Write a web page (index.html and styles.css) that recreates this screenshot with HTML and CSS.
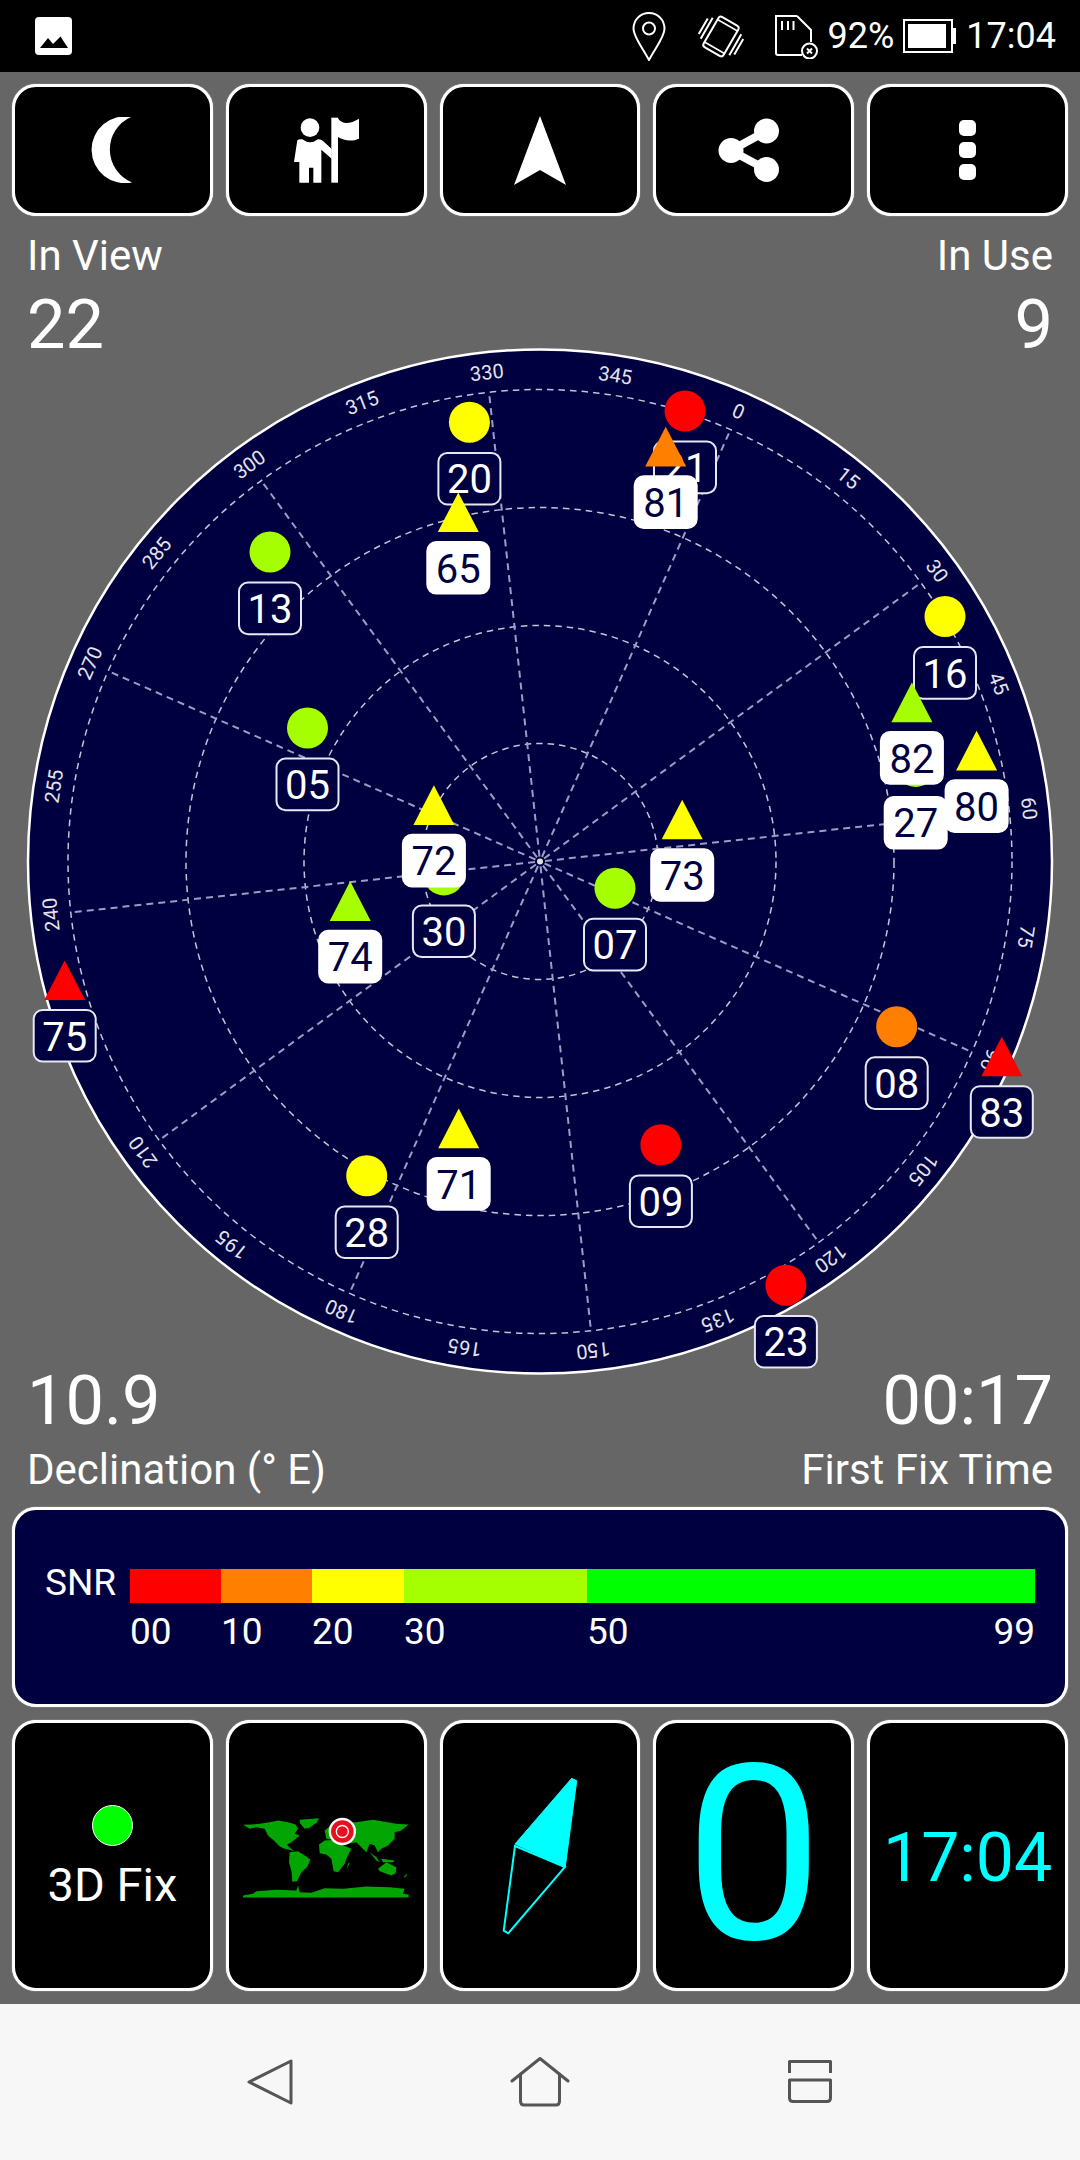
FILE: index.html
```html
<!DOCTYPE html>
<html lang="en">
<head>
    <meta charset="UTF-8">
    <meta name="viewport" content="width=device-width, initial-scale=1.0">
    <title>GPS Status</title>
    <link rel="stylesheet" href="styles.css">
</head>
<body>
    <header class="status-bar">
        <svg class="ic-image" width="37" height="38" viewBox="0 0 37 38">
            <rect width="37" height="38" rx="4" fill="#fff"/>
            <polygon points="5,31 13,21 18,27 25.5,19.5 33,31" fill="#000"/>
        </svg>
        <div class="status-right">
            <svg class="ic-pin" width="35" height="49" viewBox="0 0 35 49" fill="none" stroke="#fff" stroke-width="2">
                <path d="M17 1C8 1 1.5 8 1.5 17C1.5 25 12 38 17 48C22 38 32.5 25 32.5 17C32.5 8 26 1 17 1Z"/>
                <circle cx="17" cy="16.5" r="6"/>
            </svg>
            <svg class="ic-vibrate" width="48" height="43" viewBox="0 0 48 43" fill="none" stroke="#fff" stroke-width="2">
                <g transform="translate(24 21.5) rotate(30)">
                    <rect x="-11.5" y="-17.5" width="23" height="35" rx="3"/>
                    <path d="M-11 -13H11M-11 13H11" stroke-width="1.5"/>
                    <path d="M-16.5 -12V12M-20.5 -9V9M16.5 -12V12M20.5 -9V9"/>
                </g>
            </svg>
            <svg class="ic-sd" width="43" height="44" viewBox="0 0 43 44" fill="none" stroke="#fff" stroke-width="2">
                <path d="M22 1L36 15V27M27 40H3Q1 40 1 38V1H22"/>
                <path d="M7 6V15M13 6V15M18.5 6V15"/>
                <circle cx="34.5" cy="36" r="7.5"/>
                <path d="M32 33.5L37 38.5M37 33.5L32 38.5"/>
            </svg>
            <span class="status-text status-pct">92%</span>
            <svg class="ic-battery" width="54" height="34" viewBox="0 0 54 34">
                <rect x="1" y="1" width="48" height="32" fill="none" stroke="#fff" stroke-width="2"/>
                <rect x="5" y="5" width="38" height="24" fill="#fff"/>
                <rect x="50" y="9" width="3" height="16" fill="#fff"/>
            </svg>
            <span class="status-text status-time">17:04</span>
        </div>
    </header>

    <nav class="tile-row top-row">
        <div class="tile">
            <svg width="42" height="66" viewBox="0 0 42 66"><path d="M40 0A33.4 33.4 0 1 0 41 65.5A35.6 35.6 0 0 1 40 0Z" fill="#fff"/></svg>
        </div>
        <div class="tile">
            <svg width="65" height="66" viewBox="190 80 195 198" fill="#fff">
                <circle cx="238" cy="112" r="28"/>
                <path d="M200 150Q205 145 215 147Q238 165 262 147Q270 146 278 153L303 176V205L272 178V277H248V232H235V277H206V215H190Z"/>
                <rect x="302" y="82" width="20" height="195"/>
                <path d="M322 84C335 105 360 100 385 85V145C360 155 340 150 322 140Z"/>
            </svg>
        </div>
        <div class="tile">
            <svg width="52" height="69" viewBox="0 0 52 69"><polygon points="26,0 52,69 26,54 0,69" fill="#fff"/></svg>
        </div>
        <div class="tile">
            <svg class="ic-share" width="63" height="65" viewBox="0 0 63 65" fill="#fff" stroke="#fff">
                <path d="M49.5 13L14 32.5L49.5 51.5" fill="none" stroke-width="8"/>
                <circle cx="14" cy="32.5" r="12.5" stroke="none"/>
                <circle cx="49.5" cy="13" r="12.5" stroke="none"/>
                <circle cx="49.5" cy="51.5" r="12.5" stroke="none"/>
            </svg>
        </div>
        <div class="tile">
            <svg width="17" height="60" viewBox="0 0 17 60" fill="#fff">
                <rect width="17" height="16" rx="5"/>
                <rect y="22" width="17" height="16" rx="5"/>
                <rect y="44" width="17" height="16" rx="5"/>
            </svg>
        </div>
    </nav>

    <section class="stats stats-top">
        <div>
            <div class="stat-label">In View</div>
            <div class="stat-value">22</div>
        </div>
        <div class="stat-right">
            <div class="stat-label">In Use</div>
            <div class="stat-value">9</div>
        </div>
    </section>

    <svg class="radar" width="1080" height="1026" viewBox="0 349 1080 1026">
        <circle cx="540" cy="861.5" r="512" class="radar-disc"/>
        <g transform="translate(540 861.5)">
            <circle r="118" class="ring"/>
            <circle r="236" class="ring"/>
            <circle r="354" class="ring"/>
            <circle r="472" class="ring"/>
            <circle r="3" class="hub"/>
            <g transform="rotate(23.8)">
                <line y1="-5" y2="-472" class="spoke"/>
                <line y1="-5" y2="-472" class="spoke" transform="rotate(30)"/>
                <line y1="-5" y2="-472" class="spoke" transform="rotate(60)"/>
                <line y1="-5" y2="-472" class="spoke" transform="rotate(90)"/>
                <line y1="-5" y2="-472" class="spoke" transform="rotate(120)"/>
                <line y1="-5" y2="-472" class="spoke" transform="rotate(150)"/>
                <line y1="-5" y2="-472" class="spoke" transform="rotate(180)"/>
                <line y1="-5" y2="-472" class="spoke" transform="rotate(210)"/>
                <line y1="-5" y2="-472" class="spoke" transform="rotate(240)"/>
                <line y1="-5" y2="-472" class="spoke" transform="rotate(270)"/>
                <line y1="-5" y2="-472" class="spoke" transform="rotate(300)"/>
                <line y1="-5" y2="-472" class="spoke" transform="rotate(330)"/>

                <text y="-485" class="deg">0</text>
                <text y="-485" class="deg" transform="rotate(15)">15</text>
                <text y="-485" class="deg" transform="rotate(30)">30</text>
                <text y="-485" class="deg" transform="rotate(45)">45</text>
                <text y="-485" class="deg" transform="rotate(60)">60</text>
                <text y="-485" class="deg" transform="rotate(75)">75</text>
                <text y="-485" class="deg" transform="rotate(90)">90</text>
                <text y="-485" class="deg" transform="rotate(105)">105</text>
                <text y="-485" class="deg" transform="rotate(120)">120</text>
                <text y="-485" class="deg" transform="rotate(135)">135</text>
                <text y="-485" class="deg" transform="rotate(150)">150</text>
                <text y="-485" class="deg" transform="rotate(165)">165</text>
                <text y="-485" class="deg" transform="rotate(180)">180</text>
                <text y="-485" class="deg" transform="rotate(195)">195</text>
                <text y="-485" class="deg" transform="rotate(210)">210</text>
                <text y="-485" class="deg" transform="rotate(225)">225</text>
                <text y="-485" class="deg" transform="rotate(240)">240</text>
                <text y="-485" class="deg" transform="rotate(255)">255</text>
                <text y="-485" class="deg" transform="rotate(270)">270</text>
                <text y="-485" class="deg" transform="rotate(285)">285</text>
                <text y="-485" class="deg" transform="rotate(300)">300</text>
                <text y="-485" class="deg" transform="rotate(315)">315</text>
                <text y="-485" class="deg" transform="rotate(330)">330</text>
                <text y="-485" class="deg" transform="rotate(345)">345</text>
            </g>
        </g>

        <!-- gps, circles -->
        <g transform="translate(469.4 422.3)"><circle r="20.5" class="c-yellow"/><rect x="-31" y="30.6" width="62" height="51.6" rx="9" class="box"/><text y="71" class="num">20</text></g>
        <g transform="translate(270 552)"><circle r="20.5" class="c-lime"/><rect x="-31" y="30.6" width="62" height="51.6" rx="9" class="box"/><text y="71" class="num">13</text></g>
        <g transform="translate(307.5 728)"><circle r="20.5" class="c-lime"/><rect x="-31" y="30.6" width="62" height="51.6" rx="9" class="box"/><text y="71" class="num">05</text></g>
        <g transform="translate(685 411)"><circle r="20.5" class="c-red"/><rect x="-31" y="30.6" width="62" height="51.6" rx="9" class="box"/><text y="71" class="num">21</text></g>
        <g transform="translate(945 616.5)"><circle r="20.5" class="c-yellow"/><rect x="-31" y="30.6" width="62" height="51.6" rx="9" class="box"/><text y="71" class="num">16</text></g>
        <g transform="translate(915.7 766.4)"><circle r="20.5" class="c-lime"/><rect x="-31" y="30.6" width="62" height="51.6" rx="9" class="box used"/><text y="71" class="num num-used">27</text></g>
        <g transform="translate(443.9 874.9)"><circle r="20.5" class="c-lime"/><rect x="-31" y="30.6" width="62" height="51.6" rx="9" class="box"/><text y="71" class="num">30</text></g>
        <g transform="translate(615 888.2)"><circle r="20.5" class="c-lime"/><rect x="-31" y="30.6" width="62" height="51.6" rx="9" class="box"/><text y="71" class="num">07</text></g>
        <g transform="translate(896.7 1026.7)"><circle r="20.5" class="c-orange"/><rect x="-31" y="30.6" width="62" height="51.6" rx="9" class="box"/><text y="71" class="num">08</text></g>
        <g transform="translate(660.9 1144.8)"><circle r="20.5" class="c-red"/><rect x="-31" y="30.6" width="62" height="51.6" rx="9" class="box"/><text y="71" class="num">09</text></g>
        <g transform="translate(366.7 1175.8)"><circle r="20.5" class="c-yellow"/><rect x="-31" y="30.6" width="62" height="51.6" rx="9" class="box"/><text y="71" class="num">28</text></g>
        <g transform="translate(785.9 1285.3)"><circle r="20.5" class="c-red"/><rect x="-31" y="30.6" width="62" height="51.6" rx="9" class="box"/><text y="71" class="num">23</text></g>

        <!-- glonass, triangles -->
        <g transform="translate(458.3 492.5)"><polygon points="0,0 20.5,39.6 -20.5,39.6" class="c-yellow"/><rect x="-31" y="49.5" width="62" height="51.6" rx="9" class="box used"/><text y="90" class="num num-used">65</text></g>
        <g transform="translate(665.7 426.8)"><polygon points="0,0 20.5,39.6 -20.5,39.6" class="c-orange"/><rect x="-31" y="49.5" width="62" height="51.6" rx="9" class="box used"/><text y="90" class="num num-used">81</text></g>
        <g transform="translate(911.9 682.6)"><polygon points="0,0 20.5,39.6 -20.5,39.6" class="c-lime"/><rect x="-31" y="49.5" width="62" height="51.6" rx="9" class="box used"/><text y="90" class="num num-used">82</text></g>
        <g transform="translate(976.6 730.8)"><polygon points="0,0 20.5,39.6 -20.5,39.6" class="c-yellow"/><rect x="-31" y="49.5" width="62" height="51.6" rx="9" class="box used"/><text y="90" class="num num-used">80</text></g>
        <g transform="translate(682.2 799.7)"><polygon points="0,0 20.5,39.6 -20.5,39.6" class="c-yellow"/><rect x="-31" y="49.5" width="62" height="51.6" rx="9" class="box used"/><text y="90" class="num num-used">73</text></g>
        <g transform="translate(433.9 785.3)"><polygon points="0,0 20.5,39.6 -20.5,39.6" class="c-yellow"/><rect x="-31" y="49.5" width="62" height="51.6" rx="9" class="box used"/><text y="90" class="num num-used">72</text></g>
        <g transform="translate(350.2 881.3)"><polygon points="0,0 20.5,39.6 -20.5,39.6" class="c-lime"/><rect x="-31" y="49.5" width="62" height="51.6" rx="9" class="box used"/><text y="90" class="num num-used">74</text></g>
        <g transform="translate(458.7 1108.6)"><polygon points="0,0 20.5,39.6 -20.5,39.6" class="c-yellow"/><rect x="-31" y="49.5" width="62" height="51.6" rx="9" class="box used"/><text y="90" class="num num-used">71</text></g>
        <g transform="translate(64.7 960.5)"><polygon points="0,0 20.5,39.6 -20.5,39.6" class="c-red"/><rect x="-31" y="49.5" width="62" height="51.6" rx="9" class="box"/><text y="90" class="num">75</text></g>
        <g transform="translate(1001.8 1036.7)"><polygon points="0,0 20.5,39.6 -20.5,39.6" class="c-red"/><rect x="-31" y="49.5" width="62" height="51.6" rx="9" class="box"/><text y="90" class="num">83</text></g>
    </svg>

    <section class="stats stats-bottom">
        <div>
            <div class="stat-value">10.9</div>
            <div class="stat-label">Declination (° E)</div>
        </div>
        <div class="stat-right">
            <div class="stat-value">00:17</div>
            <div class="stat-label">First Fix Time</div>
        </div>
    </section>

    <section class="snr-panel">
        <div class="snr-label">SNR</div>
        <div class="snr-bar">
            <div class="seg-red"></div>
            <div class="seg-orange"></div>
            <div class="seg-yellow"></div>
            <div class="seg-lime"></div>
            <div class="seg-green"></div>
        </div>
        <div class="snr-scale">
            <span>00</span>
            <span>10</span>
            <span>20</span>
            <span>30</span>
            <span class="scale-end"><span>50</span><span>99</span></span>
        </div>
    </section>

    <section class="tile-row bottom-row">
        <div class="tile fix-tile">
            <div class="fix-dot"></div>
            <div class="fix-text">3D Fix</div>
        </div>
        <div class="tile">
            <svg class="world" width="166" height="81" viewBox="100 290 498 242">
                <g fill="#02a502">
                    <path d="M100 313L125 312L150 310L180 305L205 300L235 305L258 312L265 325L255 340L270 345L245 365L232 372L240 382L255 392L240 388L225 385L210 378L195 362L175 345L165 325L140 320L120 325Z"/>
                    <path d="M270 298L328 293L322 305L300 322L285 325L272 310Z"/>
                    <path d="M240 395L265 392L290 408L302 418L292 440L275 455L262 482L248 484L246 455L238 425Z"/>
                    <path d="M328 372L345 360L375 358L395 372L425 385L412 410L405 430L385 455L372 452L365 415L350 402L330 398Z"/>
                    <path d="M345 330L370 310L440 305L490 298L560 310L597 312L575 330L555 335L555 355L535 375L515 385L505 395L495 375L480 370L470 395L455 380L440 365L415 370L385 360L350 355Z"/>
                    <path d="M480 395L500 410L510 425L500 420Z"/>
                    <path d="M515 415L555 420L550 425L520 425Z"/>
                    <path d="M505 445L530 425L560 440L558 458L545 465L510 452Z"/>
                    <path d="M415 428L420 428L412 445Z"/>
                    <path d="M582 470L592 458L590 468Z"/>
                    <path d="M100 531V525L130 520L140 512L200 508L260 510L265 495L270 515L305 517L345 503L400 505L470 498L540 500L585 505L580 520L597 522V531Z"/>
                </g>
                <circle cx="398" cy="333" r="41" fill="#fff"/>
                <circle cx="398" cy="333" r="34" fill="#e8101c"/>
                <circle cx="398" cy="333" r="18" fill="#e8101c" stroke="#fff" stroke-width="4"/>
            </svg>
        </div>
        <div class="tile">
            <svg class="compass" width="200" height="265" viewBox="0 0 200 265">
                <polygon points="131.7,55.3 136.7,57.7 125.3,143.7 75,121" fill="#0ff" stroke="#0ff" stroke-width="1"/>
                <polygon points="75,123 125,144 68.3,210.3 63.7,207.7" fill="none" stroke="#0ff" stroke-width="2"/>
            </svg>
        </div>
        <div class="tile"><span class="big-zero">0</span></div>
        <div class="tile"><span class="clock">17:04</span></div>
    </section>

    <footer class="nav-bar">
        <svg width="46" height="46" viewBox="0 0 46 46" fill="none" stroke="#555" stroke-width="3" stroke-linejoin="round">
            <path d="M2 23L44 2V44Z"/>
        </svg>
        <svg width="60" height="50" viewBox="0 0 60 50" fill="none" stroke="#555" stroke-width="3" stroke-linejoin="round" stroke-linecap="round">
            <path d="M2 24L30 1.5L58 24"/>
            <path d="M10.5 17V44Q10.5 48 14 48H46Q49.5 48 49.5 44V17"/>
        </svg>
        <svg width="44" height="44" viewBox="0 0 44 44" fill="none" stroke="#555" stroke-width="3" stroke-linejoin="round">
            <path d="M1.5 13V1.5H42.5V13"/>
            <path d="M1.5 20H42.5V38Q42.5 41.5 39 41.5H5Q1.5 41.5 1.5 38Z"/>
        </svg>
    </footer>
</body>
</html>
```
FILE: styles.css
```css
body {
    font-family: Roboto, "Liberation Sans", sans-serif;
    background-color: #666;
    color: #fff;
    margin: 0;
    padding: 0;
    width: 1080px;
    height: 2160px;
    overflow: hidden;
    display: flex;
    flex-direction: column;
}

.status-bar {
    height: 72px;
    background-color: #000;
    display: flex;
    align-items: center;
    justify-content: space-between;
    padding: 0 24px 0 35px;
    flex-shrink: 0;
}

.status-right {
    display: flex;
    align-items: center;
}

.ic-vibrate { margin-left: 30px; }
.ic-sd { margin-left: 30px; margin-top: 2px; }
.status-text { font-size: 36px; }
.status-pct { margin-left: 10px; }
.ic-battery { margin-left: 9px; }
.status-time { margin-left: 9px; }
.ic-share { margin-right: 10px; }

.tile-row {
    display: grid;
    grid-template-columns: repeat(5, 1fr);
    column-gap: 13px;
    padding: 0 12px;
}

.top-row {
    height: 132px;
    margin-top: 12px;
}

.bottom-row {
    height: 271px;
    margin-top: 13px;
}

.tile {
    background-color: #000;
    border: 3px solid #fff;
    border-radius: 24px;
    box-shadow: 0 0 1px #fff;
    display: flex;
    flex-direction: column;
    align-items: center;
    justify-content: center;
    min-width: 0;
}

.stats {
    display: flex;
    justify-content: space-between;
    padding: 0 27px;
    height: 133px;
    box-sizing: border-box;
}

.stats-top {
    padding-top: 16px;
}

.stats-top .stat-value {
    margin-top: 20px;
}

.stats-bottom {
    height: 132px;
    padding-top: 1px;
}

.stats-bottom .stat-label {
    margin-top: 20px;
}

.stat-right {
    text-align: right;
}

.stat-label {
    font-size: 42px;
    line-height: 48px;
}

.stat-value {
    font-size: 68.5px;
    line-height: 50px;
}

.radar {
    display: block;
    overflow: visible;
    flex-shrink: 0;
}

.radar-disc {
    fill: #000040;
    stroke: #fff;
    stroke-width: 2.5;
}

.ring {
    fill: none;
    stroke: #c4c4d8;
    stroke-width: 1.5;
    stroke-dasharray: 6.5 5;
}

.spoke {
    stroke: #9c9cc4;
    stroke-width: 2;
    stroke-dasharray: 7 5;
}

.hub {
    fill: #ddd;
}

.deg {
    fill: #e4e4ec;
    font-size: 20px;
    text-anchor: middle;
}

.box {
    fill: #000040;
    stroke: #e8e8f4;
    stroke-width: 2;
}

.box.used {
    fill: #fff;
    stroke: #fff;
}

.num {
    fill: #fff;
    font-size: 40px;
    text-anchor: middle;
}

.num-used {
    fill: #000040;
}

.c-red { fill: #f00; }
.c-orange { fill: #ff8000; }
.c-yellow { fill: #ff0; }
.c-lime { fill: #a6ff00; }

.snr-panel {
    height: 200px;
    margin: 0 12px;
    box-sizing: border-box;
    background-color: #000040;
    border: 3px solid #fff;
    border-radius: 24px;
    box-shadow: 0 0 1px #fff;
    display: grid;
    grid-template-columns: 71px 905px;
    grid-template-rows: 34px 36px;
    column-gap: 14px;
    row-gap: 11px;
    padding: 59px 0 0 30px;
    flex-shrink: 0;
}

.snr-label {
    font-size: 37px;
    line-height: 28px;
}

.snr-bar,
.snr-scale {
    display: grid;
    grid-template-columns: 91px 91px 92px 183px 448px;
}

.seg-red { background-color: #f00; }
.seg-orange { background-color: #ff8000; }
.seg-yellow { background-color: #ff0; }
.seg-lime { background-color: #a6ff00; }
.seg-green { background-color: #0f0; }

.snr-scale {
    grid-column: 2;
    font-size: 37px;
    line-height: 36px;
}

.scale-end {
    display: flex;
    justify-content: space-between;
}

.fix-tile {
    padding-top: 6px;
    box-sizing: border-box;
}

.fix-dot {
    width: 41px;
    height: 41px;
    border-radius: 50%;
    box-sizing: border-box;
    background-color: #0f0;
    border: 1px solid #fff;
}

.fix-text {
    font-size: 47px;
    line-height: 54px;
    margin-top: 12px;
}

.world {
    margin-top: 4px;
}

.big-zero {
    font-size: 245px;
    line-height: 245px;
    color: #0ff;
}

.clock {
    font-size: 68px;
    color: #0ff;
    padding-top: 4px;
}

.nav-bar {
    margin-top: 13px;
    height: 156px;
    background-color: #f7f7f7;
    display: grid;
    grid-template-columns: repeat(3, 270px);
    padding: 0 135px;
    justify-items: center;
    align-items: center;
    flex-shrink: 0;
}
```
